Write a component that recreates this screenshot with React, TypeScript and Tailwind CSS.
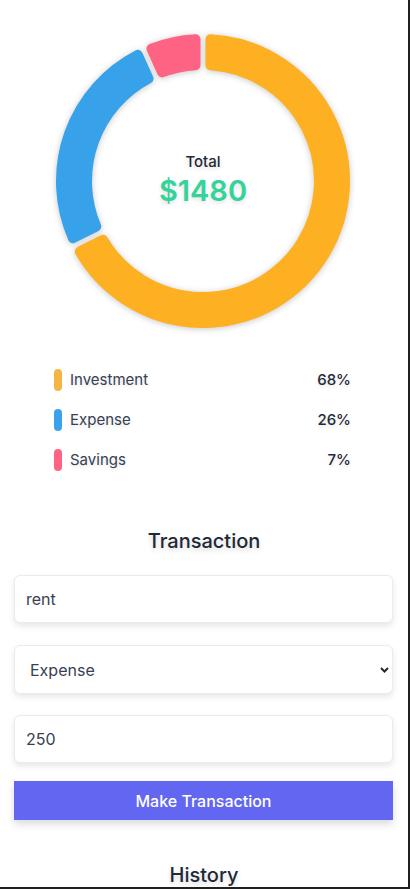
import { useState } from "react";

const CX = 203;
const CY = 181;
const R_OUT = 147;
const R_IN = 111;
const GAP = 5;
const CORNER = 5;

const slices = [
  { label: "Investment", amount: 1000, color: "#feb023", legend: "#f4b545" },
  { label: "Expense", amount: 380, color: "#37a1ea", legend: "#3aa2ea" },
  { label: "Savings", amount: 100, color: "#ff6384", legend: "#ff6384" },
];

const pt = (rho: number, a: number) =>
  `${(CX + rho * Math.sin(a)).toFixed(2)} ${(CY - rho * Math.cos(a)).toFixed(2)}`;

// annular sector shrunk by CORNER, later stroked with round joins for rounded corners
const slicePath = (a0: number, a1: number) => {
  const ro = R_OUT - CORNER;
  const ri = R_IN + CORNER;
  const d = GAP / 2 + CORNER;
  const oo = Math.asin(d / ro);
  const oi = Math.asin(d / ri);
  const large = a1 - a0 - 2 * oo > Math.PI ? 1 : 0;
  return [
    `M ${pt(ro, a0 + oo)}`,
    `A ${ro} ${ro} 0 ${large} 1 ${pt(ro, a1 - oo)}`,
    `L ${pt(ri, a1 - oi)}`,
    `A ${ri} ${ri} 0 ${large} 0 ${pt(ri, a0 + oi)}`,
    "Z",
  ].join(" ");
};

const Doughnut = () => {
  const total = slices.reduce((s, x) => s + x.amount, 0);
  let acc = 0;
  return (
    <div className="relative h-[360px] w-full">
      <svg
        width="408"
        height="360"
        viewBox="0 0 408 360"
        className="drop-shadow-[0_1px_3px_rgba(0,0,0,0.22)]"
      >
        {slices.map((s) => {
          const a0 = (acc / total) * Math.PI * 2;
          acc += s.amount;
          const a1 = (acc / total) * Math.PI * 2;
          return (
            <path
              key={s.label}
              d={slicePath(a0, a1)}
              fill={s.color}
              stroke={s.color}
              strokeWidth={CORNER * 2}
              strokeLinejoin="round"
            />
          );
        })}
      </svg>
      <div className="absolute left-0 top-[151px] flex w-[406px] flex-col items-center">
        <span className="text-[15px] leading-[22px] font-medium text-[#1f2937] [text-shadow:0_2px_4px_rgba(0,0,0,0.15)]">
          Total
        </span>
        <span className="text-[29px] leading-[36px] font-semibold text-[#34d399] [text-shadow:0_2px_4px_rgba(0,0,0,0.12)]">
          ${total}
        </span>
      </div>
    </div>
  );
};

export default function App() {
  const [title, setTitle] = useState("rent");
  const [kind, setKind] = useState("Expense");
  const [amount, setAmount] = useState("250");
  const total = slices.reduce((s, x) => s + x.amount, 0);

  return (
    <div
      className="h-[889px] w-[410px] overflow-hidden bg-[#202020]"
      style={{ fontFamily: "Inter, 'Noto Sans', sans-serif" }}
    >
      <div className="h-[887px] w-[408px] overflow-hidden bg-white">
        <Doughnut />

        {/* legend */}
        <div className="pl-[54px] pr-[57px]">
          {slices.map((s) => (
            <div key={s.label} className="flex h-10 items-center justify-between">
              <div className="flex items-center gap-2">
                <span
                  className="h-[22px] w-2 rounded-full"
                  style={{ backgroundColor: s.legend }}
                />
                <span className="text-[15px] text-[#374151] [text-shadow:0_2px_4px_rgba(0,0,0,0.12)]">
                  {s.label}
                </span>
              </div>
              <span className="text-[15px] font-medium text-[#1f2937] [text-shadow:0_2px_4px_rgba(0,0,0,0.12)]">
                {Math.round((s.amount / total) * 100)}%
              </span>
            </div>
          ))}
        </div>

        {/* transaction form */}
        <h2 className="mt-[47px] text-center text-[20px] leading-7 font-medium text-[#1f2937] [text-shadow:0_3px_5px_rgba(0,0,0,0.15)]">
          Transaction
        </h2>
        <div className="mx-[14px] mt-[20px] flex w-[379px] flex-col">
          <input
            value={title}
            onChange={(e) => setTitle(e.target.value)}
            className="h-12 rounded-md border border-[#ebebeb] bg-white px-[11px] text-[16px] text-[#374151] shadow-[0_3px_6px_rgba(0,0,0,0.1)] outline-none"
          />
          <div className="relative mt-[22px]">
            <select
              value={kind}
              onChange={(e) => setKind(e.target.value)}
              className="h-[49px] w-full appearance-none rounded-md border border-[#ebebeb] bg-white px-[15px] text-[16px] text-[#374151] shadow-[0_3px_6px_rgba(0,0,0,0.1)] outline-none"
            >
              <option>Investment</option>
              <option>Expense</option>
              <option>Savings</option>
            </select>
            <svg
              width="9"
              height="6"
              viewBox="0 0 9 6"
              className="pointer-events-none absolute right-[4px] top-[22px]"
            >
              <path d="M1 1 L4.5 4.5 L8 1" fill="none" stroke="#1f2937" strokeWidth="2" />
            </svg>
          </div>
          <input
            value={amount}
            onChange={(e) => setAmount(e.target.value)}
            className="mt-[21px] h-12 rounded-md border border-[#ebebeb] bg-white px-[11px] text-[16px] text-[#374151] shadow-[0_3px_6px_rgba(0,0,0,0.1)] outline-none"
          />
          <button className="mt-[18px] h-[39px] bg-[#6366f1] text-[16px] font-medium text-white shadow-[0_4px_8px_rgba(0,0,0,0.15)]">
            Make Transaction
          </button>
        </div>

        <h2 className="mt-[41px] text-center text-[20px] leading-7 font-medium text-[#1f2937] [text-shadow:0_3px_5px_rgba(0,0,0,0.15)]">
          History
        </h2>
      </div>
    </div>
  );
}
